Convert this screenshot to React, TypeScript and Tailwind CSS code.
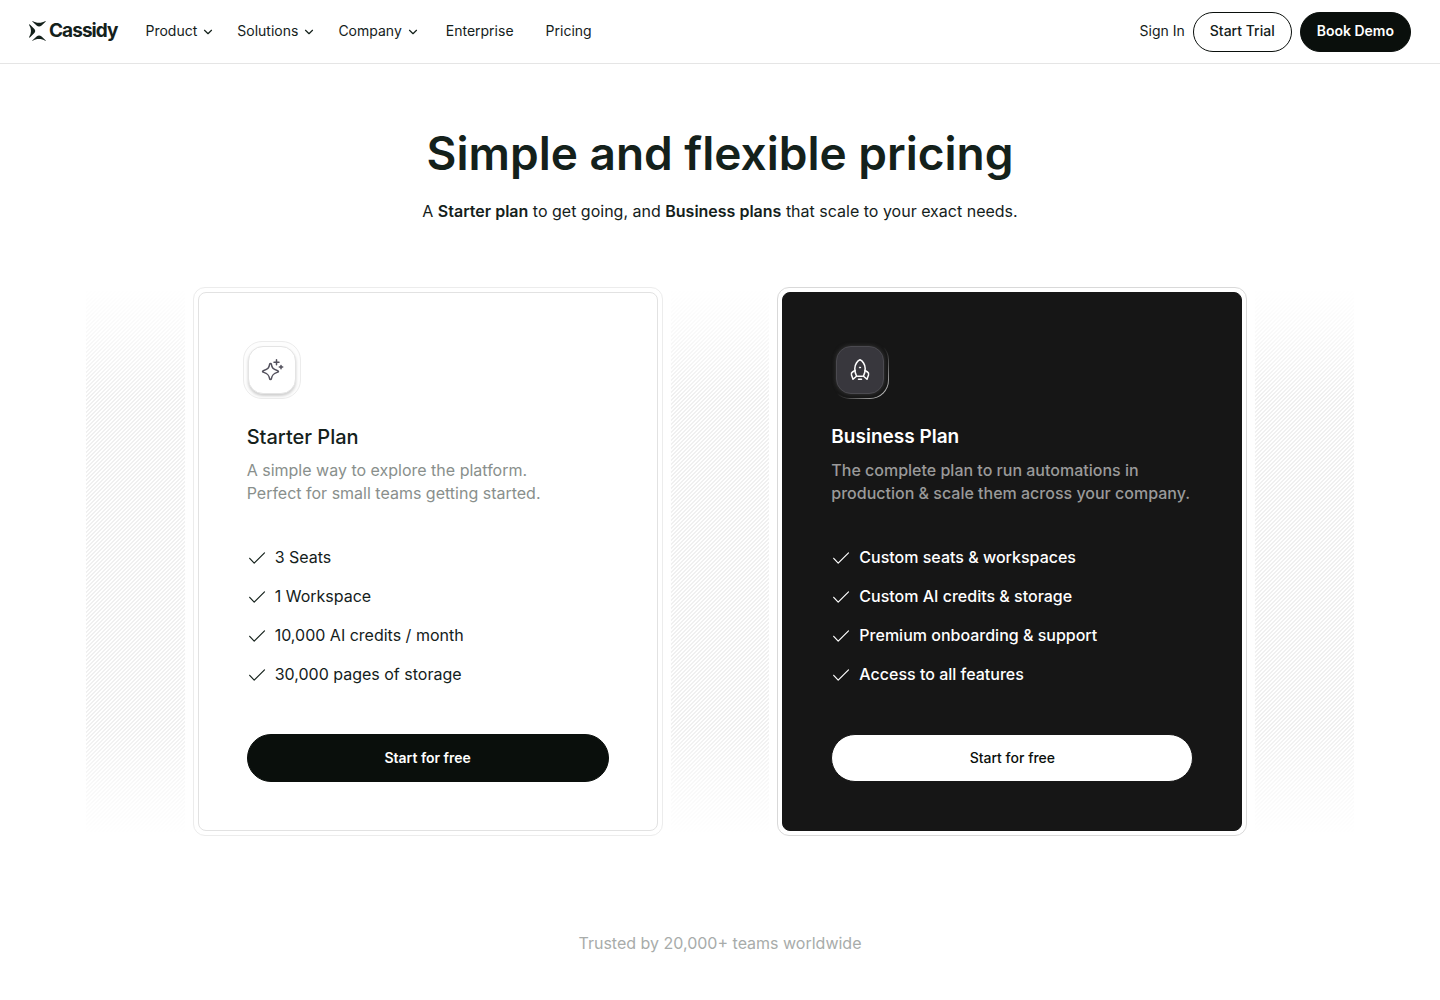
import React from 'react';
import { ChevronDown } from 'lucide-react';

interface NavItem {
  label: string;
  hasMenu: boolean;
}

interface Plan {
  name: string;
  description: string[];
  features: string[];
  dark: boolean;
}

const navItems: NavItem[] = [
  { label: 'Product', hasMenu: true },
  { label: 'Solutions', hasMenu: true },
  { label: 'Company', hasMenu: true },
  { label: 'Enterprise', hasMenu: false },
  { label: 'Pricing', hasMenu: false },
];

const plans: Plan[] = [
  {
    name: 'Starter Plan',
    description: ['A simple way to explore the platform.', 'Perfect for small teams getting started.'],
    features: ['3 Seats', '1 Workspace', '10,000 AI credits / month', '30,000 pages of storage'],
    dark: false,
  },
  {
    name: 'Business Plan',
    description: ['The complete plan to run automations in', 'production & scale them across your company.'],
    features: [
      'Custom seats & workspaces',
      'Custom AI credits & storage',
      'Premium onboarding & support',
      'Access to all features',
    ],
    dark: true,
  },
];

const Logo: React.FC = () => (
  <a href="#" className="flex items-center gap-[3px] pb-0.5 text-[#14211b]">
    <svg width="17" height="22" viewBox="0 0 17 22" fill="currentColor" aria-hidden="true">
      <path d="M3.6 1C7 3.4 12.8 3.4 16.4 1L16.8 1.6L12.6 5.4Q10 7.6 7.6 5.4L3.3 1.5Z" />
      <path d="M3.6 21C7 18.4 12.8 18.4 16.4 21L16.8 20.4L12.6 16.6Q10 14.2 7.6 16.6L3.3 20.5Z" />
      <path d="M.6 4.2L5.6 9.3Q7 11 5.6 12.7L.6 17.8L0 17.3Q4 11 0 4.7Z" />
    </svg>
    <span className="text-[19px] leading-6 font-bold tracking-tighter">Cassidy</span>
  </a>
);

const SparklesIcon: React.FC = () => (
  <svg width="24" height="24" viewBox="0 0 24 24" fill="none" stroke="#52505c" strokeWidth="1.5" strokeLinecap="round" strokeLinejoin="round" aria-hidden="true">
    <path d="M10.5 5.5C11 5.5 11.3 5.8 11.4 6.3C12 9.9 13 11.3 17.2 12.5C18.9 13 18.9 13.9 17.2 14.4C13.2 15.6 12.1 17 11.4 20.6C11.2 21.9 9.8 21.9 9.6 20.6C8.9 17 7.8 15.6 3.8 14.4C2.1 13.9 2.1 13 3.8 12.5C8 11.3 9 9.9 9.6 6.3C9.7 5.8 10 5.5 10.5 5.5Z" />
    <path d="M16.5 1.8V6.8M14 4.3H19M21 7.4V10.8M19.3 9.1H22.7" />
  </svg>
);

const RocketIcon: React.FC = () => (
  <svg width="24" height="24" viewBox="0 0 24 24" fill="none" stroke="#fff" strokeWidth="1.5" strokeLinecap="round" strokeLinejoin="round" aria-hidden="true">
    <path d="M8.5 18C7.3 15.5 6.8 13 6.8 10.5C6.8 6.5 9.5 2.8 12 1.8C14.5 2.8 17.2 6.5 17.2 10.5C17.2 13 16.7 15.5 15.5 18C13 18.5 11 18.5 8.5 18Z" />
    <path d="M7 12.5L4.5 14C3.5 14.6 3.2 15.8 3.5 17L5 21.3L8.5 18.3" />
    <path d="M17 12.5L19.5 14C20.5 14.6 20.8 15.8 20.5 17L19 21.3L15.5 18.3" />
    <path d="M10.5 21.3H13.5" />
    <circle cx="12" cy="9.5" r=".6" fill="#fff" strokeWidth="1" />
  </svg>
);

const CheckIcon: React.FC = () => (
  <svg width="20" height="20" viewBox="0 0 20 20" fill="none" stroke="currentColor" strokeWidth="1.2" strokeLinecap="round" strokeLinejoin="round" aria-hidden="true">
    <path d="M2.7 10.3L7.2 15.1L17.5 4.8" />
  </svg>
);

const Stripes: React.FC = () => (
  <div className="min-w-0 flex-1 bg-[linear-gradient(135deg,#f0f0f0_25%,transparent_25%,transparent_50%,#f0f0f0_50%,#f0f0f0_75%,transparent_75%)] bg-size-[4px_4px] mask-[linear-gradient(to_bottom,transparent,black_20%,black_80%,transparent)]" />
);

const PlanIcon: React.FC<{ dark: boolean }> = ({ dark }) =>
  dark ? (
    <div className="w-[58px] rounded-[19px] bg-linear-to-br from-[#161616] from-50% to-[#e4e4e4] p-px">
      <div className="rounded-[18px] bg-[#161616] p-1">
        <div className="flex size-12 items-center justify-center rounded-[15px] border border-[#4b4a50] bg-[#38373d] shadow-[0_0_4px_#3a3a3a]">
          <RocketIcon />
        </div>
      </div>
    </div>
  ) : (
    <div className="-ml-1 w-[58px] rounded-[19px] border border-[#ececec] bg-[#fdfdfd] p-1">
      <div className="flex size-12 items-center justify-center rounded-[15px] border border-[#e4e4e4] bg-white shadow-[0_2px_3px_#00000030]">
        <SparklesIcon />
      </div>
    </div>
  );

const PlanCard: React.FC<{ plan: Plan }> = ({ plan }) => (
  <article className={`w-[470px] rounded-xl border p-1 ${plan.dark ? 'border-[#d9d9d9]' : 'border-[#ececec]'}`}>
    <div
      className={`rounded-lg border p-12 ${
        plan.dark ? 'border-[#161616] bg-[#161616] text-white' : 'border-[#e2e2e2] bg-white text-[#14211b]'
      }`}
    >
      <PlanIcon dark={plan.dark} />
      <h2 className={`mt-6 leading-7 ${plan.dark ? 'text-[19px] font-semibold' : 'text-[20px] font-medium'}`}>{plan.name}</h2>
      <p className={`mt-2 text-[16px] leading-[23px] ${plan.dark ? 'font-medium text-[#9a9a9a]' : 'text-[#898f8c]'}`}>
        {plan.description.map((line) => (
          <span key={line} className="block whitespace-nowrap">
            {line}
          </span>
        ))}
      </p>
      <ul className={`mt-[41px] space-y-4 text-[16px] leading-[23px] ${plan.dark ? 'font-medium' : ''}`}>
        {plan.features.map((feature) => (
          <li key={feature} className="flex items-center gap-2">
            <CheckIcon />
            {feature}
          </li>
        ))}
      </ul>
      <button
        type="button"
        className={`mt-12 h-12 w-full rounded-full border pb-0.5 text-[14px] ${
          plan.dark ? 'border-[#161616] bg-white font-medium text-[#0a0f0c]' : 'border-[#0a0f0c] bg-[#0a0f0c] font-semibold text-white'
        }`}
      >
        Start for free
      </button>
    </div>
  </article>
);

const App: React.FC = () => {
  return (
    <div className="bg-white font-['Inter','Liberation_Sans',sans-serif] text-[#14211b]">
      <header className="flex h-16 items-center border-b border-[#e5e5e5] px-[29px]">
        <Logo />
        <nav className="ml-7 flex items-center pb-0.5 text-[14px] leading-5">
          {navItems.map((item) =>
            item.hasMenu ? (
              <button key={item.label} type="button" className="mr-[22px] flex items-center gap-1">
                {item.label}
                <ChevronDown size={14} strokeWidth={2} className="mt-0.5" />
              </button>
            ) : (
              <a key={item.label} href="#" className="mr-7 ml-1">
                {item.label}
              </a>
            )
          )}
        </nav>
        <div className="ml-auto flex items-center gap-2 text-[14px] leading-5">
          <a href="#" className="pb-0.5">
            Sign In
          </a>
          <button type="button" className="h-10 rounded-full border border-[#0a0f0c] px-4 pb-0.5 font-medium">
            Start Trial
          </button>
          <button type="button" className="h-10 rounded-full border border-[#0a0f0c] bg-[#0a0f0c] px-4 pb-0.5 font-semibold text-white">
            Book Demo
          </button>
        </div>
      </header>

      <main>
        <section className="pt-16 text-center">
          <h1 className="text-[46px] leading-[50px] font-semibold">Simple and flexible pricing</h1>
          <p className="mt-[21px] text-[16px] leading-6">
            A <strong className="font-semibold">Starter plan</strong> to get going, and{' '}
            <strong className="font-semibold">Business plans</strong> that scale to your exact needs.
          </p>
        </section>

        <section className="mx-auto mt-16 flex max-w-[1268px] gap-2">
          <Stripes />
          <PlanCard plan={plans[0]} />
          <Stripes />
          <PlanCard plan={plans[1]} />
          <Stripes />
        </section>

        <p className="pt-[95px] pb-11 text-center text-[16px] leading-6 text-[#a8acaa]">Trusted by 20,000+ teams worldwide</p>
      </main>
    </div>
  );
};

export default App;
